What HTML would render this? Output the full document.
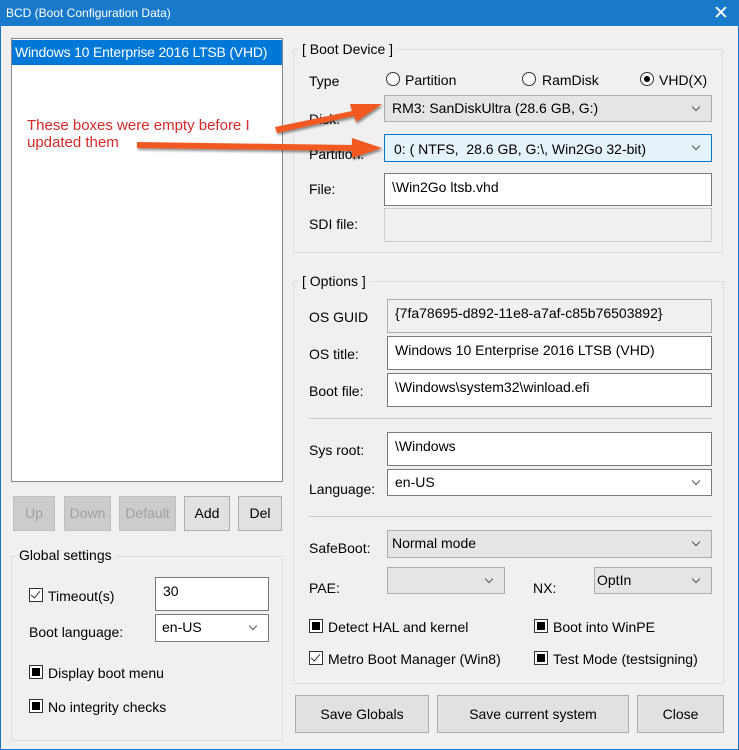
<!DOCTYPE html>
<html><head><meta charset="utf-8"><style>
*{box-sizing:border-box;margin:0;padding:0}
body{width:739px;height:750px;overflow:hidden;background:#f0f0f0;font-family:"Liberation Sans",sans-serif;font-size:14px;color:#000;position:relative}
.a{position:absolute;white-space:nowrap}
.frame{position:absolute;left:0;top:0;width:739px;height:750px;border:1px solid #1a73c8;border-top:none}
.title{position:absolute;left:0;top:0;width:739px;height:26px;background:#1979ca;color:#fff;font-size:12px;padding:6px 0 0 6px}
.in{position:absolute;background:#fff;border:1px solid #7a7a7a;padding:5px 0 0 7px;white-space:nowrap}
.dis{background:#f0f0f0;border-color:#ccc}
.cb{position:absolute;background:#e5e5e5;border:1px solid #adadad;padding:4px 0 0 4px;white-space:nowrap}
.cb::after{content:"";position:absolute;right:12px;top:8px;width:5px;height:5px;border-right:1px solid #555;border-bottom:1px solid #555;transform:rotate(45deg)}
.wh{background:#fff;border-color:#7a7a7a}
.btn{position:absolute;background:#e1e1e1;border:1px solid #adadad;text-align:center;white-space:nowrap}
.db{background:#cccccc;border-color:#bfbfbf;color:#9f9f9f}
.grp{position:absolute;border:1px solid #dcdcdc}
.lbl{position:absolute;background:#f0f0f0;padding:0 3px;white-space:nowrap}
.chk{position:absolute;width:14px;height:14px;border:1px solid #333;background:#fff}
.sq::after{content:"";position:absolute;left:2px;top:2px;width:8px;height:8px;background:#000}
.tk::after{content:"";position:absolute;left:3px;top:0px;width:4px;height:8px;border-right:1.5px solid #333;border-bottom:1.5px solid #333;transform:rotate(40deg)}
.rad{position:absolute;width:14px;height:14px;border:1px solid #333;border-radius:50%;background:#fff}
.rad.on::after{content:"";position:absolute;left:3px;top:3px;width:6px;height:6px;border-radius:50%;background:#000}
.sep{position:absolute;height:1px;background:#a0a0a0}
</style></head><body>
<div class="frame"></div>
<div class="title">BCD (Boot Configuration Data)</div>
<div class="a" style="left:713px;top:2px;color:#fff;font-size:19px">✕</div>

<div class="a" style="left:11px;top:38px;width:272px;height:444px;background:#fff;border:1px solid #828790"></div>
<div class="a" style="left:12px;top:40px;width:270px;height:25px;background:#0078d7;color:#fff;font-size:14px;letter-spacing:-0.2px;padding:4px 0 0 3px;overflow:hidden">Windows 10 Enterprise 2016 LTSB (VHD)</div>

<div class="btn db" style="left:13px;top:496px;width:42px;height:35px;line-height:33px">Up</div>
<div class="btn db" style="left:64px;top:496px;width:47px;height:35px;line-height:33px">Down</div>
<div class="btn db" style="left:119px;top:496px;width:57px;height:35px;line-height:33px">Default</div>
<div class="btn" style="left:184px;top:496px;width:46px;height:35px;line-height:33px">Add</div>
<div class="btn" style="left:238px;top:496px;width:44px;height:35px;line-height:33px">Del</div>

<div class="grp" style="left:11px;top:556px;width:272px;height:185px"></div>
<div class="lbl" style="left:16px;top:547px">Global settings</div>
<div class="chk tk" style="left:29px;top:588px"></div>
<div class="a" style="left:48px;top:588px">Timeout(s)</div>
<div class="in" style="left:155px;top:577px;width:114px;height:34px">30</div>
<div class="a" style="left:29px;top:624px">Boot language:</div>
<div class="cb wh" style="left:155px;top:614px;width:114px;height:28px;padding-left:6px">en-US</div>
<div class="chk sq" style="left:29px;top:665px"></div>
<div class="a" style="left:48px;top:665px">Display boot menu</div>
<div class="chk sq" style="left:29px;top:699px"></div>
<div class="a" style="left:48px;top:699px">No integrity checks</div>

<div class="grp" style="left:293px;top:49px;width:430px;height:204px"></div>
<div class="lbl" style="left:299px;top:41px">[ Boot Device ]</div>
<div class="a" style="left:309px;top:73px">Type</div>
<div class="rad" style="left:386px;top:72px"></div><div class="a" style="left:405px;top:72px">Partition</div>
<div class="rad" style="left:522px;top:72px"></div><div class="a" style="left:542px;top:72px">RamDisk</div>
<div class="rad on" style="left:640px;top:72px"></div><div class="a" style="left:659px;top:72px">VHD(X)</div>
<div class="a" style="left:309px;top:111px">Disk:</div>
<div class="cb" style="left:384px;top:95px;width:328px;height:27px;padding-left:7px">RM3: SanDiskUltra (28.6 GB, G:)</div>
<div class="a" style="left:309px;top:146px">Partition:</div>
<div class="cb" style="left:384px;top:134px;width:328px;height:28px;background:#e5f1fb;border-color:#0078d7;padding-left:9px;padding-top:6px">0: ( NTFS,&nbsp; 28.6 GB, G:\, Win2Go 32-bit)</div>
<div class="a" style="left:309px;top:181px">File:</div>
<div class="in" style="left:384px;top:173px;width:328px;height:33px">\Win2Go ltsb.vhd</div>
<div class="a" style="left:309px;top:216px">SDI file:</div>
<div class="in dis" style="left:384px;top:208px;width:328px;height:34px"></div>

<div class="grp" style="left:293px;top:281px;width:431px;height:403px"></div>
<div class="lbl" style="left:299px;top:273px">[ Options ]</div>
<div class="a" style="left:309px;top:309px">OS GUID</div>
<div class="in dis" style="left:387px;top:299px;width:325px;height:34px;border-color:#adadad">{7fa78695-d892-11e8-a7af-c85b76503892}</div>
<div class="a" style="left:309px;top:346px">OS title:</div>
<div class="in" style="left:387px;top:336px;width:325px;height:34px">Windows 10 Enterprise 2016 LTSB (VHD)</div>
<div class="a" style="left:309px;top:383px">Boot file:</div>
<div class="in" style="left:387px;top:373px;width:325px;height:34px">\Windows\system32\winload.efi</div>
<div class="sep" style="left:309px;top:418px;width:403px;background:#c8c8c8"></div>
<div class="a" style="left:309px;top:442px">Sys root:</div>
<div class="in" style="left:387px;top:432px;width:325px;height:34px">\Windows</div>
<div class="a" style="left:309px;top:481px">Language:</div>
<div class="cb wh" style="left:387px;top:469px;width:325px;height:27px;padding-left:7px">en-US</div>
<div class="sep" style="left:309px;top:516px;width:403px;background:#c8c8c8"></div>
<div class="a" style="left:309px;top:540px">SafeBoot:</div>
<div class="cb" style="left:387px;top:530px;width:325px;height:28px">Normal mode</div>
<div class="a" style="left:309px;top:580px">PAE:</div>
<div class="cb" style="left:387px;top:567px;width:118px;height:27px"></div>
<div class="a" style="left:533px;top:580px">NX:</div>
<div class="cb" style="left:594px;top:567px;width:118px;height:27px;padding-left:2px">OptIn</div>
<div class="chk sq" style="left:309px;top:619px"></div><div class="a" style="left:328px;top:619px">Detect HAL and kernel</div>
<div class="chk sq" style="left:534px;top:619px"></div><div class="a" style="left:553px;top:619px">Boot into WinPE</div>
<div class="chk tk" style="left:309px;top:651px"></div><div class="a" style="left:328px;top:651px">Metro Boot Manager (Win8)</div>
<div class="chk sq" style="left:534px;top:651px"></div><div class="a" style="left:553px;top:651px">Test Mode (testsigning)</div>

<div class="btn" style="left:295px;top:695px;width:134px;height:38px;line-height:36px">Save Globals</div>
<div class="btn" style="left:437px;top:695px;width:192px;height:38px;line-height:36px">Save current system</div>
<div class="btn" style="left:637px;top:695px;width:87px;height:38px;line-height:36px">Close</div>

<div class="a" style="left:27px;top:117px;color:#d42a2a;font-size:15px">These boxes were empty before I</div>
<div class="a" style="left:27px;top:134px;color:#d42a2a;font-size:15px">updated them</div>
<svg class="a" style="left:0;top:0" width="739" height="750">
<defs><filter id="s"><feDropShadow dx="1" dy="2" stdDeviation="1.2" flood-color="#000" flood-opacity="0.45"/></filter></defs>
<g filter="url(#s)" fill="#f05a22">
<path d="M275 127 L352 111 L350 104 L382 104 L356 122 L354 116 L277 133 Z"/>
<path d="M137 142 L352 145 L352 138 L382 148 L352 158 L352 151 L137 148 Z"/>
</g></svg>
</body></html>
